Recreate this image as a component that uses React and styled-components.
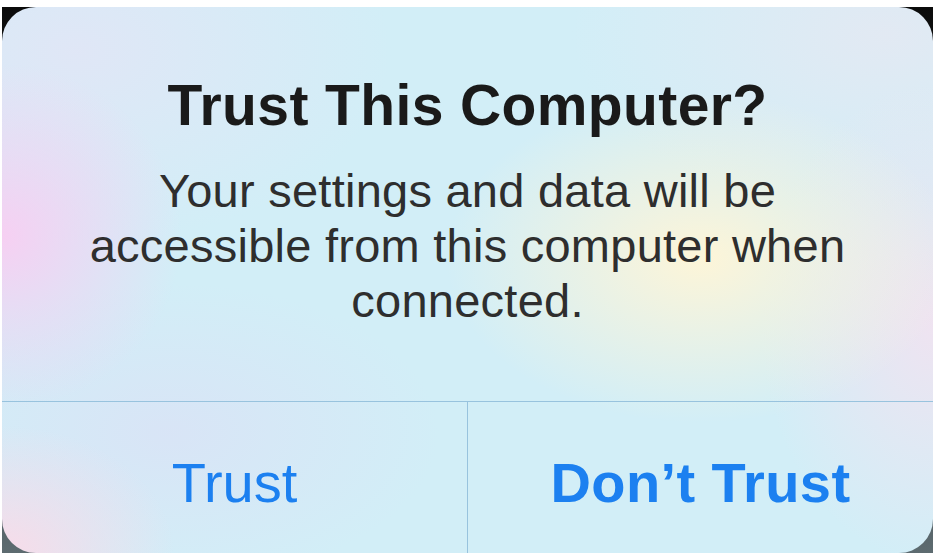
import styled, { createGlobalStyle } from "styled-components";

const GlobalStyle = createGlobalStyle`
    html, body {
        margin: 0;
        padding: 0;
        background: #ffffff;
    }
    body {
        font-family: "Liberation Sans", Arial, sans-serif;
    }
`;

const Frame = styled.div`
    width: 931px;
    height: 546px;
    margin: 7px 0 0 2px;
    background: linear-gradient(to bottom, #0b0b0b 0%, #2a3236 50%, #5d6b70 100%);
    display: flex;
`;

const Card = styled.div`
    flex: 1;
    display: flex;
    flex-direction: column;
    border-radius: 34px;
    overflow: hidden;
    background:
        radial-gradient(ellipse 240px 230px at 0% 42%, rgba(248, 206, 242, 0.95), rgba(248, 206, 242, 0) 75%),
        radial-gradient(ellipse 230px 170px at 0% 100%, rgba(250, 218, 232, 0.95), rgba(250, 218, 232, 0) 75%),
        radial-gradient(ellipse 340px 220px at 75% 46%, rgba(253, 245, 216, 1), rgba(253, 245, 216, 0) 75%),
        radial-gradient(ellipse 230px 320px at 100% 58%, rgba(242, 226, 240, 0.9), rgba(242, 226, 240, 0) 75%),
        radial-gradient(ellipse 420px 260px at 8% 8%, rgba(226, 229, 246, 0.85), rgba(226, 229, 246, 0) 75%),
        radial-gradient(ellipse 360px 200px at 18% 78%, rgba(218, 226, 246, 0.8), rgba(218, 226, 246, 0) 75%),
        radial-gradient(ellipse 420px 240px at 95% 5%, rgba(230, 232, 242, 0.8), rgba(230, 232, 242, 0) 75%),
        #d2eef7;
`;

const Body = styled.div`
    height: 395px;
    box-sizing: border-box;
    padding-top: 66px;
    display: flex;
    flex-direction: column;
    align-items: center;
    text-align: center;
`;

const Title = styled.h1`
    margin: 0;
    font-size: 57px;
    line-height: 64px;
    font-weight: 700;
    color: #1a1a1a;
    letter-spacing: 0.4px;
`;

const Message = styled.p`
    margin: 26px 0 0;
    max-width: 810px;
    font-size: 47px;
    line-height: 55px;
    color: #2e2e2e;
    letter-spacing: 0.25px;
`;

const Actions = styled.div`
    display: flex;
    height: 151px;
    border-top: 1px solid #98c3de;
`;

const Action = styled.button`
    flex: 1;
    border: none;
    background: transparent;
    padding: 9px 0 0;
    margin: 0;
    font-family: "Liberation Sans", Arial, sans-serif;
    font-size: 56px;
    font-weight: ${(p) => (p.$bold ? 700 : 400)};
    letter-spacing: ${(p) => (p.$bold ? "0.4px" : "0")};
    color: #1c80f0;
    cursor: pointer;
    & + & {
        border-left: 1px solid #98c3de;
    }
`;

const App = () => {
    return (
        <>
            <GlobalStyle />
            <Frame>
                <Card>
                    <Body>
                        <Title>Trust This Computer?</Title>
                        <Message>
                            Your settings and data will be accessible from this computer when connected.
                        </Message>
                    </Body>
                    <Actions>
                        <Action>Trust</Action>
                        <Action $bold>Don’t Trust</Action>
                    </Actions>
                </Card>
            </Frame>
        </>
    );
};

export default App;
